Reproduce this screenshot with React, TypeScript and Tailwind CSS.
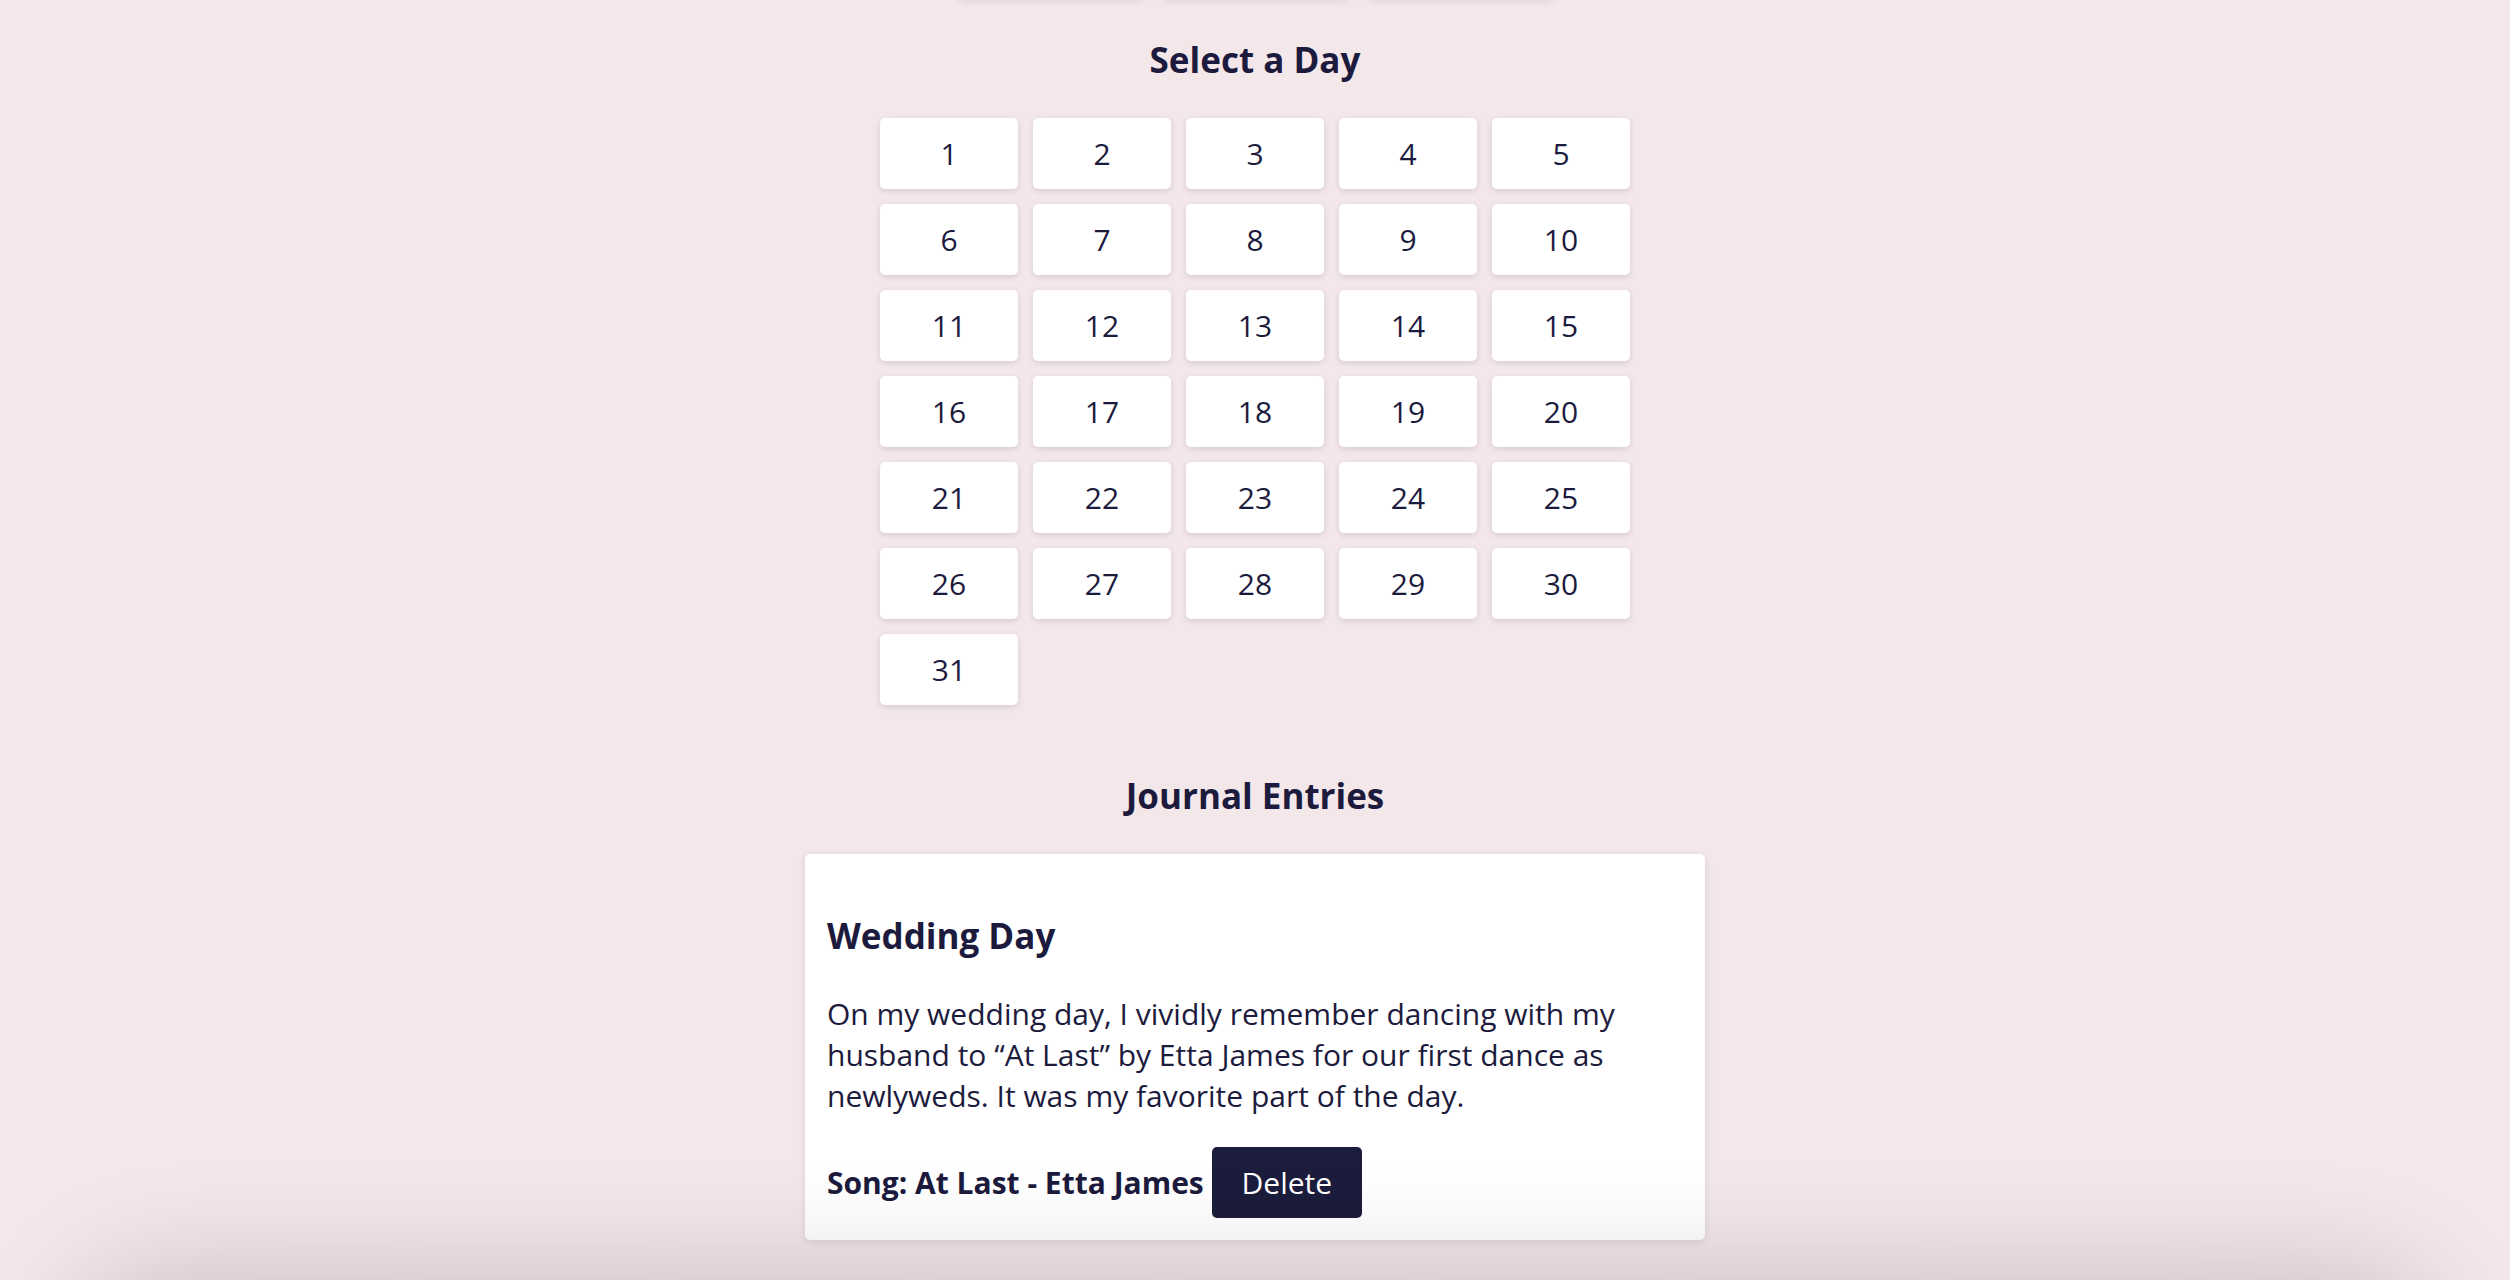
const days = Array.from({ length: 31 }, (_, i) => i + 1);

export default function App() {
  return (
    <div className="relative min-h-screen overflow-hidden bg-[#f4e7ea] font-['Open_Sans',sans-serif] text-[30px] leading-[normal] text-[#1c1b3d]">
      {/* month buttons, scrolled mostly out of view */}
      <div className="-mt-[72px] flex justify-center gap-[20px]">
        {[0, 1, 2].map((i) => (
          <div
            key={i}
            className="h-[70px] w-[185px] rounded-[5px] bg-white shadow-[0_2px_8px_rgba(0,0,0,0.12)]"
          />
        ))}
      </div>

      <h2 className="mt-[38px] mb-[35px] text-center text-[35px] font-bold">Select a Day</h2>

      <div className="mx-auto grid w-[750px] grid-cols-5 gap-[15px]">
        {days.map((d) => (
          <button
            key={d}
            type="button"
            className="rounded-[5px] bg-white py-[15px] text-center shadow-[0_2px_6px_rgba(0,0,0,0.12)]"
          >
            {d}
          </button>
        ))}
      </div>

      <h2 className="mt-[67px] mb-[35px] text-center text-[35px] font-bold">Journal Entries</h2>

      <div className="mx-auto w-[900px] rounded-[5px] bg-white p-[22px] shadow-[0_2px_8px_rgba(0,0,0,0.1)]">
        <h3 className="mt-[36px] mb-[34px] text-[35px] font-bold">Wedding Day</h3>
        <p className="mb-[31px]">
          On my wedding day, I vividly remember dancing with my husband to “At Last” by Etta James
          for our first dance as newlyweds. It was my favorite part of the day.
        </p>
        <p>
          <strong>Song: At Last - Etta James</strong>{" "}
          <button
            type="button"
            className="inline-block rounded-[5px] bg-[#1c1c3c] px-[30px] py-[15px] text-white"
          >
            Delete
          </button>
        </p>
      </div>

      {/* shadow of the bar below the viewport */}
      <div className="pointer-events-none fixed inset-x-[80px] top-full h-[300px] rounded-[80px] shadow-[0_0_120px_rgba(0,0,0,0.2)]" />
    </div>
  );
}
